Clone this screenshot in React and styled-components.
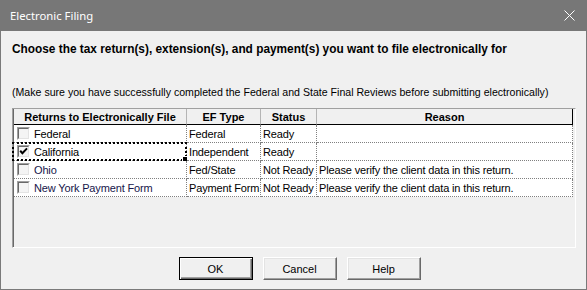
import React from "react";
import styled, { createGlobalStyle } from "styled-components";

const GlobalStyle = createGlobalStyle`
  html, body {
    margin: 0;
    padding: 0;
    background: #f0f0f0;
  }
  * {
    box-sizing: border-box;
  }
`;

const Window = styled.div`
  width: 587px;
  height: 290px;
  border: 1px solid #7a7a7a;
  border-top: none;
  background: #f0f0f0;
  display: flex;
  flex-direction: column;
  font-family: "Liberation Sans", Arial, sans-serif;
  font-size: 11px;
  color: #000;
`;

const TitleBar = styled.div`
  height: 31px;
  flex: none;
  background: #777777;
  display: flex;
  align-items: center;
  justify-content: space-between;
  padding: 0 10px 0 10px;
  margin: 0 -1px;
  color: #fff;
  font-family: "Noto Sans", sans-serif;
  font-size: 11.3px;
`;

const CloseIcon = styled.svg`
  width: 11px;
  height: 11px;
  margin-right: 2px;
`;

const Body = styled.div`
  flex: 1;
  padding: 11px 10px 0 11px;
  display: flex;
  flex-direction: column;
`;

const Heading = styled.div`
  font-weight: bold;
  font-size: 11.85px;
  line-height: 14px;
`;

const Note = styled.div`
  margin-top: 30px;
  font-size: 10.6px;
  line-height: 13px;
  white-space: nowrap;
`;

const Panel = styled.div`
  margin-top: 9px;
  height: 140px;
  border-style: solid;
  border-width: 1px;
  border-color: #a0a0a0 #ffffff #ffffff #a0a0a0;
  padding: 0 1px 0 0;
`;

const PanelInner = styled.div`
  height: 100%;
  border-left: 1px solid #696969;
`;

const Grid = styled.table`
  border-collapse: separate;
  border-spacing: 0;
  table-layout: fixed;
  width: 559px;
`;

const HeadCell = styled.th`
  height: 16px;
  padding: 0;
  font-weight: bold;
  font-size: 11px;
  text-align: center;
  background: #f0f0f0;
  border-bottom: 1px solid #000;
  border-right: 1px solid ${(p) => (p.$last ? "#000" : "#b4b4b4")};
  line-height: 14px;
`;

const Cell = styled.td`
  position: relative;
  height: 18px;
  padding: 0 0 0 2px;
  background: #fff;
  border-right: 1px dotted #808080;
  border-bottom: 1px dotted #808080;
  white-space: nowrap;
  overflow: visible;
  line-height: 16px;
  letter-spacing: -0.15px;
`;

const NameCell = styled.div`
  display: flex;
  align-items: center;
  gap: 4px;
  padding-left: 1px;
  color: ${(p) => (p.$navy ? "#16164a" : "#000")};
`;

const Box = styled.span`
  width: 13px;
  height: 13px;
  flex: none;
  border-style: solid;
  border-width: 1px;
  border-color: #a0a0a0 #ffffff #ffffff #a0a0a0;
  display: flex;
`;

const BoxInner = styled.span`
  flex: 1;
  border-style: solid;
  border-width: 1px;
  border-color: #696969 #e3e3e3 #e3e3e3 #696969;
  background: #f4f4f4;
  display: flex;
  align-items: center;
  justify-content: center;
`;

const FocusRing = styled.span`
  position: absolute;
  left: -2px;
  top: -1px;
  right: -1px;
  bottom: -1px;
  border: 2px dotted #000;
  pointer-events: none;
  &::after {
    content: "";
    position: absolute;
    right: -3px;
    bottom: -3px;
    width: 4px;
    height: 4px;
    background: #000;
    border: 1px solid #fff;
  }
`;

const ButtonRow = styled.div`
  display: flex;
  justify-content: center;
  gap: 10px;
  padding-left: 11px;
  margin-top: 9px;
`;

const Button = styled.button`
  width: 74px;
  height: 23px;
  padding: 0;
  font-family: "Liberation Sans", Arial, sans-serif;
  font-size: 11px;
  color: #000;
  background: #f0f0f0;
  border-style: solid;
  border-width: 1px;
  border-color: ${(p) =>
    p.$default ? "#000" : "#ffffff #696969 #696969 #ffffff"};
  box-shadow: ${(p) =>
    p.$default
      ? "inset 1px 1px 0 #fff, inset -1px -1px 0 #696969, inset -2px -2px 0 #a0a0a0"
      : "inset -1px -1px 0 #a0a0a0, inset 1px 1px 0 #e3e3e3"};
`;

const rows = [
  { name: "Federal", type: "Federal", status: "Ready", reason: "" },
  { name: "California", type: "Independent", status: "Ready", reason: "", checked: true, focused: true },
  { name: "Ohio", type: "Fed/State", status: "Not Ready", reason: "Please verify the client data in this return.", navy: true },
  { name: "New York Payment Form", type: "Payment Form", status: "Not Ready", reason: "Please verify the client data in this return.", navy: true },
];

// classic 7x7 check glyph
const Check = () => (
  <svg width="9" height="9" viewBox="0 0 9 9">
    <path d="M1.2 3.8 L3.4 6.2 L8 1.4" stroke="#000" strokeWidth="2" fill="none" />
  </svg>
);

const App = () => {
  return (
    <>
      <GlobalStyle />
      <Window>
        <TitleBar>
          <span>Electronic Filing</span>
          <CloseIcon viewBox="0 0 11 11">
            <path d="M0.5 0.5 L10.5 10.5 M10.5 0.5 L0.5 10.5" stroke="#fff" strokeWidth="1" />
          </CloseIcon>
        </TitleBar>
        <Body>
          <Heading>
            Choose the tax return(s), extension(s), and payment(s) you want to file electronically for
          </Heading>
          <Note>
            (Make sure you have successfully completed the Federal and State Final Reviews before submitting electronically)
          </Note>
          <Panel>
            <PanelInner>
              <Grid>
                <colgroup>
                  <col style={{ width: 173 }} />
                  <col style={{ width: 74 }} />
                  <col style={{ width: 56 }} />
                  <col style={{ width: 256 }} />
                </colgroup>
                <thead>
                  <tr>
                    <HeadCell>Returns to Electronically File</HeadCell>
                    <HeadCell>EF Type</HeadCell>
                    <HeadCell>Status</HeadCell>
                    <HeadCell $last>Reason</HeadCell>
                  </tr>
                </thead>
                <tbody>
                  {rows.map((r) => (
                    <tr key={r.name}>
                      <Cell>
                        <NameCell $navy={r.navy}>
                          <Box>
                            <BoxInner>{r.checked && <Check />}</BoxInner>
                          </Box>
                          {r.name}
                        </NameCell>
                        {r.focused && <FocusRing />}
                      </Cell>
                      <Cell>{r.type}</Cell>
                      <Cell>{r.status}</Cell>
                      <Cell>{r.reason}</Cell>
                    </tr>
                  ))}
                </tbody>
              </Grid>
            </PanelInner>
          </Panel>
          <ButtonRow>
            <Button $default>OK</Button>
            <Button>Cancel</Button>
            <Button>Help</Button>
          </ButtonRow>
        </Body>
      </Window>
    </>
  );
};

export default App;
